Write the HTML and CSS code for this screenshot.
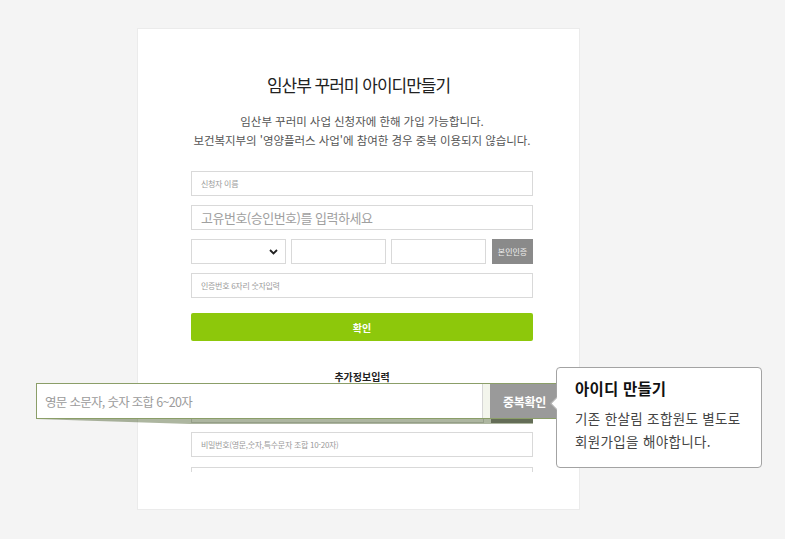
FILE: index.html
```html
<!DOCTYPE html>
<html lang="ko">
<head>
<meta charset="utf-8">
<title>임산부 꾸러미 아이디만들기</title>
<link rel="stylesheet" href="styles.css">
</head>
<body>
<div class="card">
  <div class="viewport">
    <h1 class="title">임산부 꾸러미 아이디만들기</h1>
    <p class="desc">임산부 꾸러미 사업 신청자에 한해 가입 가능합니다.<br>보건복지부의 '영양플러스 사업'에 참여한 경우 중복 이용되지 않습니다.</p>
    <div class="form">
      <div class="field"><span class="ph ph-sm">신청자 이름</span></div>
      <div class="field"><span class="ph ph-lg">고유번호(승인번호)를 입력하세요</span></div>
      <div class="row">
        <div class="field sel">
          <svg class="chev" width="9" height="6" viewBox="0 0 9 6"><path d="M1 1l3.5 3.5L8 1" fill="none" stroke="#222" stroke-width="1.8"/></svg>
        </div>
        <div class="field"></div>
        <div class="field"></div>
        <div class="btn-gray">본인인증</div>
      </div>
      <div class="field"><span class="ph ph-sm">인증번호 6자리 숫자입력</span></div>
      <div class="btn-green">확인</div>
      <div class="subhead">추가정보입력</div>
      <div class="row row-id">
        <div class="field grow"></div>
        <div class="btn-gray btn-dup"></div>
      </div>
      <div class="field"><span class="ph ph-sm">비밀번호(영문,숫자,특수문자 조합 10-20자)</span></div>
      <div class="field"></div>
    </div>
  </div>
</div>

<div class="tint"></div>
<div class="zoom">
  <div class="zoom-input"><span class="zoom-ph">영문 소문자, 숫자 조합 6~20자</span></div>
  <div class="zoom-btn">중복확인</div>
</div>

<div class="tip">
  <div class="tip-title">아이디 만들기</div>
  <div class="tip-body">기존 한살림 조합원도 별도로<br>회원가입을 해야합니다.</div>
</div>
</body>
</html>
```

FILE: styles.css
```css
html, body {
  margin: 0;
  padding: 0;
}
body {
  width: 785px;
  height: 539px;
  overflow: hidden;
  background: #f4f4f4;
  font-family: "Noto Sans CJK KR", "Noto Sans", sans-serif;
  color: #333;
  position: relative;
}
.card {
  margin: 28px 0 0 137px;
  width: 441px;
  height: 480px;
  background: #fff;
  border: 1px solid #ebebeb;
  box-sizing: content-box;
}
.viewport {
  height: 443px;
  overflow: hidden;
}
.title {
  margin: 43px 0 0;
  font-size: 17px;
  font-weight: 400;
  line-height: 26px;
  text-align: center;
  color: #222;
  letter-spacing: -1px;
}
.desc {
  margin: 14px 0 0;
  padding-left: 7px;
  font-size: 11.5px;
  line-height: 19px;
  text-align: center;
  color: #555;
  letter-spacing: -0.05px;
}
.form {
  margin: 21px 0 0 53px;
  width: 342px;
  display: flex;
  flex-direction: column;
  gap: 9px;
}
.field {
  height: 25px;
  border: 1px solid #d9d9d9;
  box-sizing: border-box;
  background: #fff;
  display: flex;
  align-items: center;
  padding-left: 9px;
}
.ph {
  color: #9a9a9a;
  letter-spacing: -0.3px;
  white-space: nowrap;
}
.ph-sm { font-size: 8px; }
.ph-lg { font-size: 13px; color: #a0a0a0; letter-spacing: -0.5px; }
.row {
  display: flex;
  gap: 5px;
}
.row .field {
  width: 95px;
  flex: none;
}
.row .sel {
  justify-content: flex-end;
  padding-right: 7px;
}
.chev { display: block; }
.btn-gray {
  width: 42px;
  height: 25px;
  background: #8a8a8a;
  color: #f0f0f0;
  font-size: 8px;
  display: flex;
  align-items: center;
  justify-content: center;
  margin-left: 1px;
}
.btn-green {
  margin-top: 6px;
  height: 28px;
  border-radius: 2px;
  background: #8dc80b;
  color: #fff;
  font-size: 10px;
  font-weight: 700;
  display: flex;
  align-items: center;
  justify-content: center;
}
.subhead {
  margin-top: 20px;
  font-size: 10px;
  font-weight: 700;
  text-align: center;
  line-height: 14px;
  color: #222;
}
.row-id { margin-top: 5px; gap: 7px; }
.row-id .grow { flex: 1; width: auto; }
.btn-dup { margin-left: 0; }
.form > .field:last-child { margin-top: 1px; }

/* magnified highlight */
.tint {
  position: absolute;
  left: 36px;
  top: 383px;
  width: 497px;
  height: 41px;
  background: rgba(40, 62, 5, 0.38);
  clip-path: polygon(0 0, 100% 0, 100% 100%, 154px 100%, 0 36px);
}
.zoom {
  position: absolute;
  left: 36px;
  top: 383px;
  width: 521px;
  height: 36px;
  box-sizing: border-box;
  border: 1px solid #8b9e68;
  border-right: none;
  background: #f3f5ec;
  display: flex;
  justify-content: space-between;
}
.zoom-input {
  width: 446px;
  background: #fff;
  border-right: 1px solid #d6d6d6;
  display: flex;
  align-items: center;
  padding-left: 8px;
  box-sizing: border-box;
}
.zoom-ph {
  font-size: 12.5px;
  color: #9b9b9b;
  letter-spacing: -0.7px;
}
.zoom-btn {
  width: 67px;
  background: #9a9a9a;
  color: #fff;
  font-size: 12px;
  font-weight: 700;
  display: flex;
  align-items: center;
  padding-left: 13px;
  box-sizing: border-box;
  letter-spacing: -0.3px;
}

/* tooltip */
.tip {
  position: absolute;
  left: 556px;
  top: 367px;
  width: 206px;
  height: 101px;
  box-sizing: border-box;
  background: #fff;
  border: 1px solid #a3a3a3;
  border-radius: 4px;
  padding: 8px 0 0 18px;
}
.tip::before {
  content: "";
  position: absolute;
  left: -5px;
  top: 31px;
  width: 8px;
  height: 8px;
  background: #fff;
  border-left: 1px solid #a3a3a3;
  border-bottom: 1px solid #a3a3a3;
  transform: rotate(45deg);
}
.tip-title {
  font-size: 15.5px;
  font-weight: 700;
  color: #111;
  line-height: 24px;
  letter-spacing: 0.2px;
}
.tip-body {
  margin-top: 7px;
  font-size: 13.5px;
  line-height: 23px;
  color: #444;
  letter-spacing: 0.35px;
}
```
